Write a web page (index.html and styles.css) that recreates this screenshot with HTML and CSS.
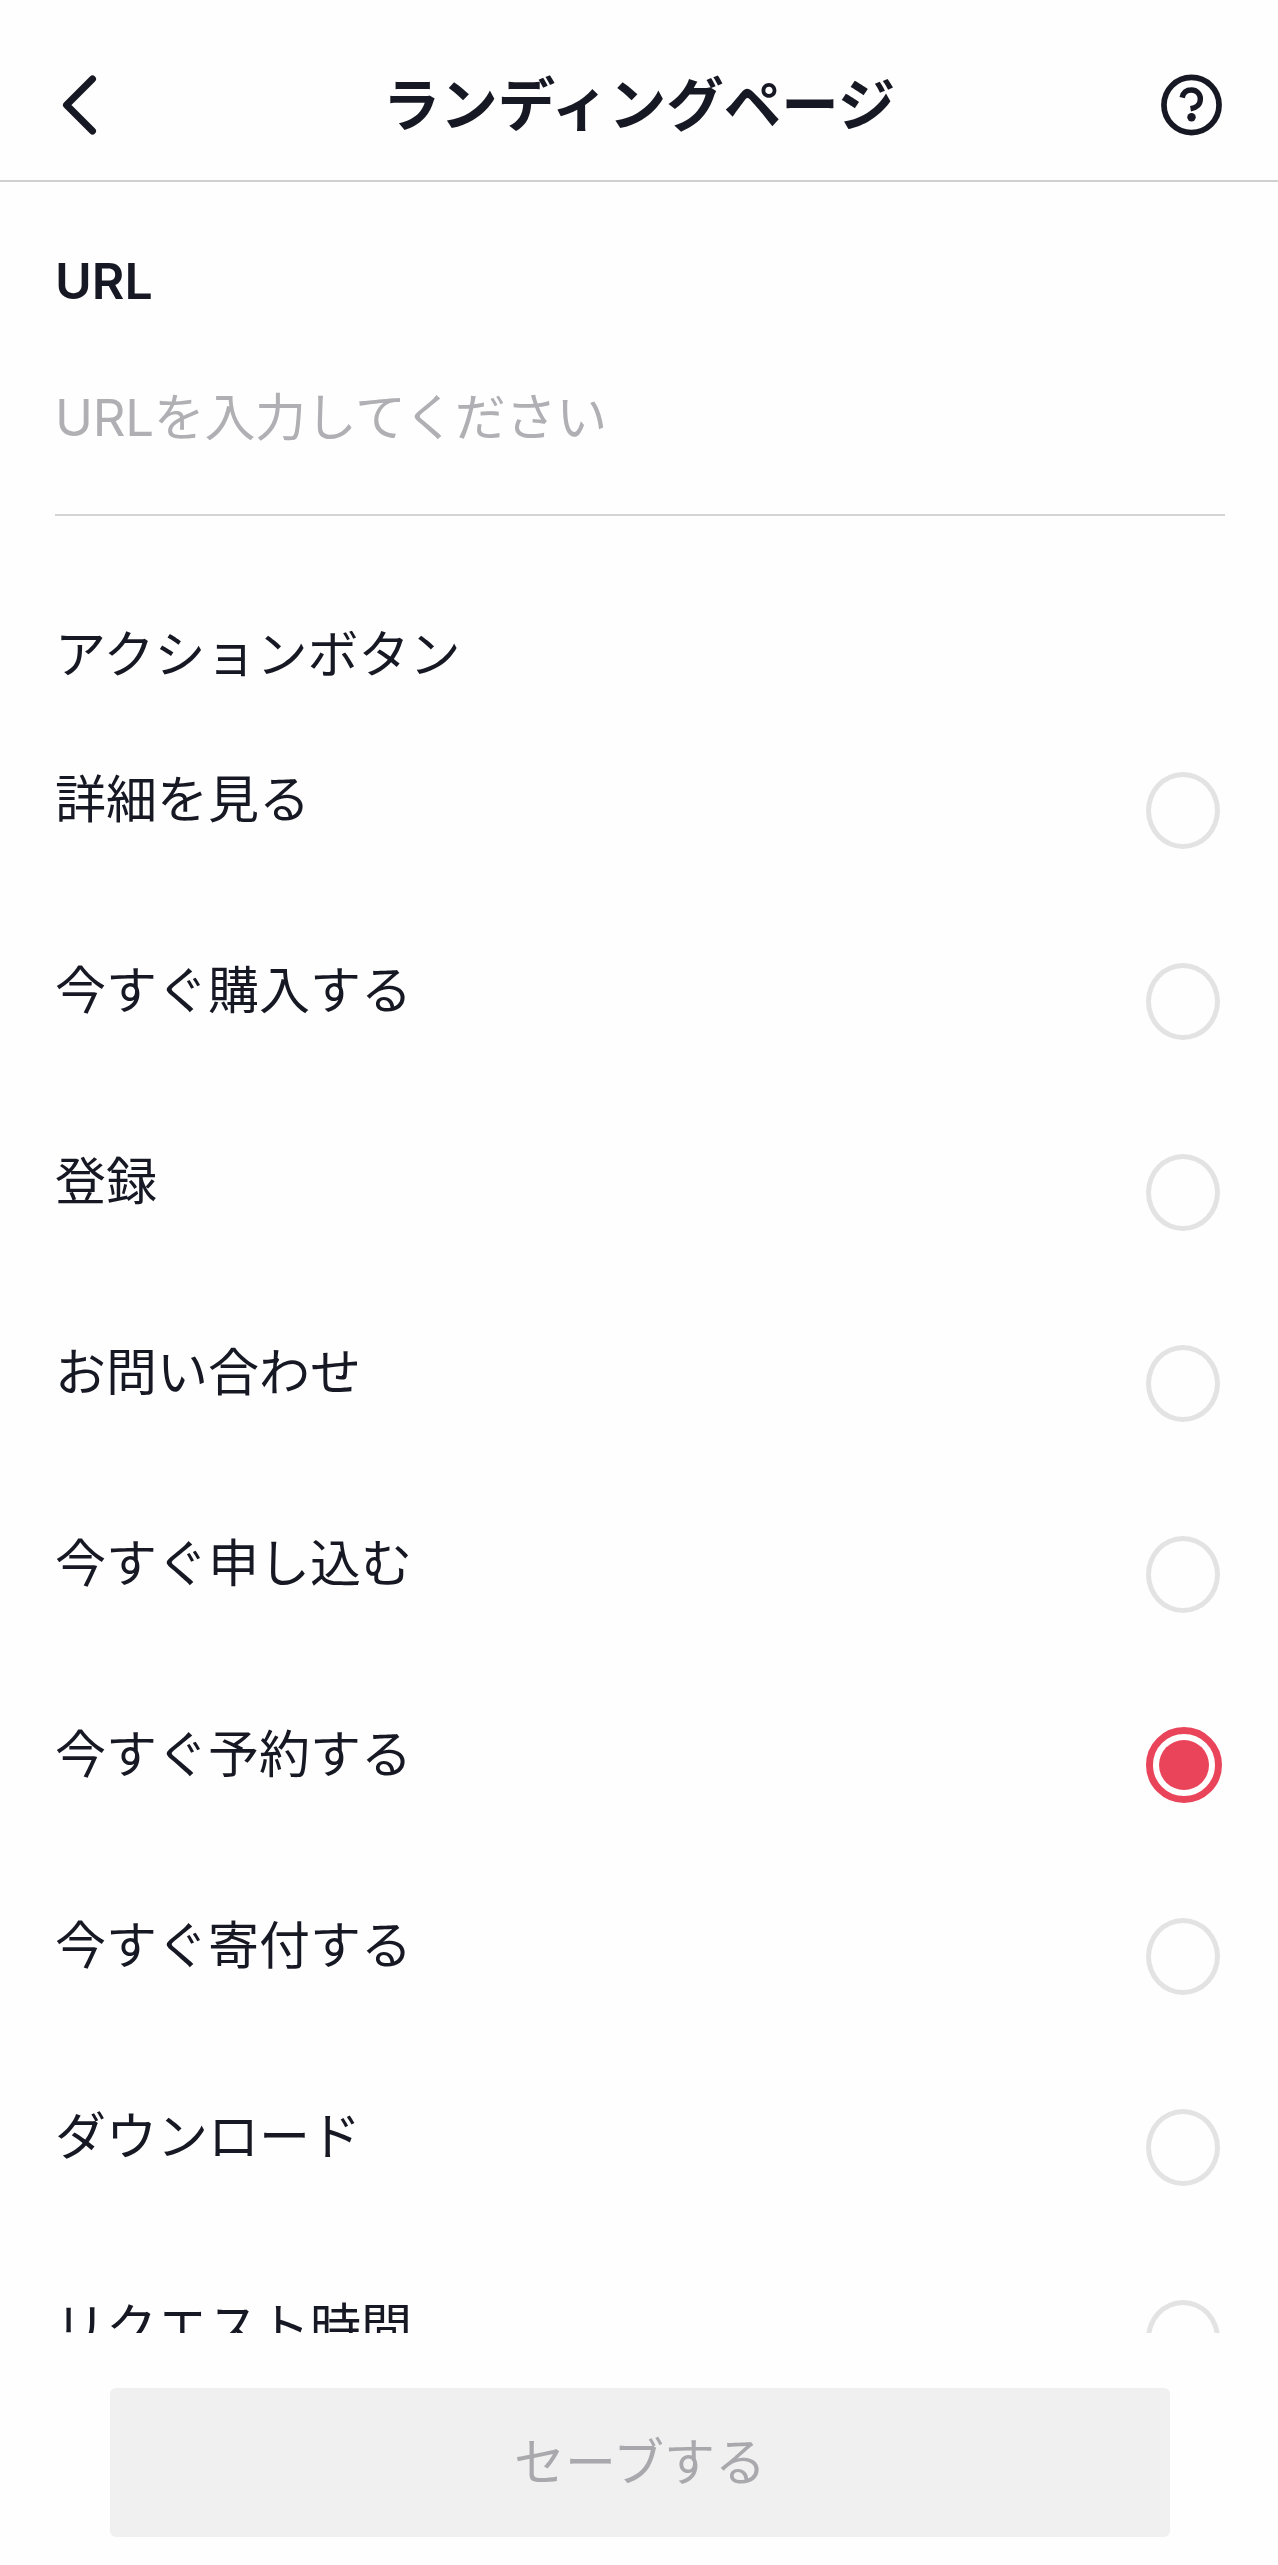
FILE: index.html
```html
<!DOCTYPE html>
<html lang="ja">
<head>
  <meta charset="UTF-8">
  <title>ランディングページ</title>
  <link rel="stylesheet" href="styles.css">
</head>
<body>
  <header class="header">
    <button class="icono" aria-label="戻る">
      <svg width="44" height="66" viewBox="0 0 44 66" fill="none" stroke="#161823" stroke-width="7" stroke-linecap="round" stroke-linejoin="round">
        <path d="M36.500 7 10.500 33 36.500 59" />
      </svg>
    </button>
    <h1>ランディングページ</h1>
    <button class="icono" aria-label="ヘルプ">
      <svg width="62" height="62" viewBox="0 0 62 62" fill="none" stroke="#161823">
        <circle cx="31" cy="31" r="28" stroke-width="5.800" />
        <path d="M21.500 23.500C22.500 18.500 26 15.800 31 15.800c5.200 0 9 4 9 9 0 5.500-4 9-10 10" stroke-width="5.500" stroke-linecap="butt" />
        <circle cx="31" cy="43.500" r="4.300" fill="#161823" stroke="none" />
      </svg>
    </button>
  </header>

  <main class="contenido">
    <div class="campo">
      <label for="url">URL</label>
      <input id="url" type="text" placeholder="URLを入力してください">
    </div>

    <h2>アクションボタン</h2>
    <div class="opciones">
      <label class="opcion">詳細を見る<input type="radio" name="accion"></label>
      <label class="opcion">今すぐ購入する<input type="radio" name="accion"></label>
      <label class="opcion">登録<input type="radio" name="accion"></label>
      <label class="opcion">お問い合わせ<input type="radio" name="accion"></label>
      <label class="opcion">今すぐ申し込む<input type="radio" name="accion"></label>
      <label class="opcion">今すぐ予約する<input type="radio" name="accion" checked></label>
      <label class="opcion">今すぐ寄付する<input type="radio" name="accion"></label>
      <label class="opcion">ダウンロード<input type="radio" name="accion"></label>
      <label class="opcion">リクエスト時間<input type="radio" name="accion"></label>
    </div>
  </main>

  <footer class="pie">
    <button class="guardar" disabled>セーブする</button>
  </footer>
</body>
</html>
```

FILE: styles.css
```css
* {
  box-sizing: border-box;
}

body {
  margin: 0;
  height: 2565px;
  display: flex;
  flex-direction: column;
  overflow: hidden;
  background: #fefefe;
  color: #161823;
  font-family: Inter, 'Noto Sans CJK JP', sans-serif;
  font-size: 51px;
}

button, input {
  font-family: inherit;
  border: none;
  padding: 0;
  background: none;
}

.header {
  height: 182px;
  flex: none;
  display: flex;
  justify-content: space-between;
  align-items: center;
  padding: 30px 56px 0 56px;
  border-bottom: 2px solid #d0d0d0;
}

.header h1 {
  margin: 0;
  font-size: 57.5px;
  line-height: 80px;
  font-weight: 700;
}

.icono {
  width: 61px;
  display: flex;
}

.contenido {
  height: 2151px;
  flex: none;
  overflow: hidden;
  padding: 63px 53px 0 55px;
}

.campo {
  height: 271px;
  border-bottom: 2px solid #d4d4d4;
}

.campo label {
  display: block;
  line-height: 72px;
  font-size: 50px;
  font-weight: 600;
}

.campo input {
  display: block;
  width: 100%;
  height: 80px;
  margin-top: 60px;
  font-size: 51px;
  letter-spacing: -0.3px;
  outline: none;
}

.campo input::placeholder {
  color: #b0b0b4;
}

h2 {
  margin: 99px 0 0;
  font-size: 51px;
  line-height: 80px;
  font-weight: 400;
}

.opciones {
  margin-top: 65px;
}

.opcion {
  height: 191px;
  display: flex;
  justify-content: space-between;
  align-items: flex-start;
  line-height: 80px;
}

.opcion input {
  appearance: none;
  width: 74px;
  height: 77px;
  margin: 12px 5px 0 0;
  border: 5px solid #e3e3e3;
  border-radius: 50%;
}

.opcion input:checked {
  width: 76px;
  height: 76px;
  margin-right: 3px;
  border: 7px solid #ea445a;
  background: #ea445a;
  background-clip: content-box;
  padding: 6px;
}

.pie {
  padding: 55px 108px 0 110px;
}

.guardar {
  width: 100%;
  height: 149px;
  border-radius: 6px;
  background: #f0f0f0;
  color: #a9a9ad;
  font-size: 51px;
  padding-bottom: 8px;
}
```
